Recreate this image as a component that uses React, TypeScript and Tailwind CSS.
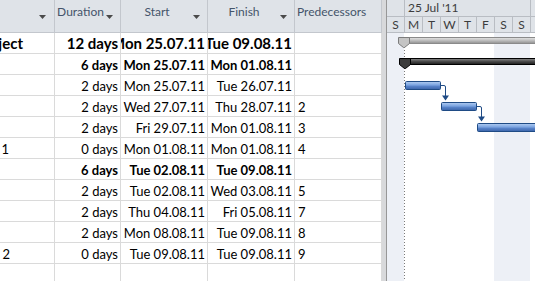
import React from 'react';

type Row = {
  name?: string;
  namePad?: string;
  dur: string;
  start: string;
  finish: string;
  pred?: string;
  kind?: 'project' | 'summary';
};

const rows: Row[] = [
  { name: 'Project', namePad: 'pr-[31px]', dur: '12 days', start: 'Mon 25.07.11', finish: 'Tue 09.08.11', kind: 'project' },
  { dur: '6 days', start: 'Mon 25.07.11', finish: 'Mon 01.08.11', kind: 'summary' },
  { dur: '2 days', start: 'Mon 25.07.11', finish: 'Tue 26.07.11' },
  { dur: '2 days', start: 'Wed 27.07.11', finish: 'Thu 28.07.11', pred: '2' },
  { dur: '2 days', start: 'Fri 29.07.11', finish: 'Mon 01.08.11', pred: '3' },
  { name: 'Milestone 1', namePad: 'pr-[45px]', dur: '0 days', start: 'Mon 01.08.11', finish: 'Mon 01.08.11', pred: '4' },
  { dur: '6 days', start: 'Tue 02.08.11', finish: 'Tue 09.08.11', kind: 'summary' },
  { dur: '2 days', start: 'Tue 02.08.11', finish: 'Wed 03.08.11', pred: '5' },
  { dur: '2 days', start: 'Thu 04.08.11', finish: 'Fri 05.08.11', pred: '7' },
  { dur: '2 days', start: 'Mon 08.08.11', finish: 'Tue 09.08.11', pred: '8' },
  { name: 'Milestone 2', namePad: 'pr-[44px]', dur: '0 days', start: 'Tue 09.08.11', finish: 'Tue 09.08.11', pred: '9' },
  { dur: '', start: '', finish: '' },
];

const days = ['S', 'M', 'T', 'W', 'T', 'F', 'S', 'S'];

function DropArrow() {
  return (
    <svg width="7" height="4" viewBox="0 0 7 4" className="shrink-0">
      <path d="M0 0h7L3.5 4z" fill="#4a4a4a" />
    </svg>
  );
}

function weightClass(kind?: Row['kind']) {
  if (kind === 'project') return 'font-bold text-[15px] leading-[20px]';
  if (kind === 'summary') return 'font-bold text-[13px] leading-[22px]';
  return 'text-[13px] leading-[22px]';
}

function Gantt() {
  return (
    <svg width="148" height="248" viewBox="387 33 148 248" className="block">
      <defs>
        <linearGradient id="task" x1="0" y1="0" x2="0" y2="1">
          <stop offset="0" stopColor="#b2cdf2" />
          <stop offset="0.45" stopColor="#7aa3e0" />
          <stop offset="0.6" stopColor="#5883c9" />
          <stop offset="1" stopColor="#3a64a8" />
        </linearGradient>
        <linearGradient id="proj" x1="0" y1="0" x2="0" y2="1">
          <stop offset="0" stopColor="#e6e6e6" />
          <stop offset="0.5" stopColor="#bdbdbd" />
          <stop offset="1" stopColor="#8f8f8f" />
        </linearGradient>
        <linearGradient id="summ" x1="0" y1="0" x2="0" y2="1">
          <stop offset="0" stopColor="#8a8a8a" />
          <stop offset="0.5" stopColor="#4a4a4a" />
          <stop offset="1" stopColor="#1a1a1a" />
        </linearGradient>
      </defs>
      <rect x="387" y="33" width="17" height="248" fill="#edf0f6" />
      <rect x="494" y="33" width="36" height="248" fill="#edf0f6" />
      <line x1="404.5" y1="47" x2="404.5" y2="281" stroke="#7a7a7a" strokeDasharray="1 2" />

      {/* project summary */}
      <rect x="400.5" y="37.5" width="140" height="6" fill="url(#proj)" stroke="#8a8a8a" />
      <path d="M398.5 37.5h11v6l-5 4h-1l-5-4z" fill="#c4c4c4" stroke="#7c7c7c" />

      {/* phase summary */}
      <rect x="400.5" y="58.5" width="140" height="6" fill="url(#summ)" stroke="#000" />
      <path d="M399.5 58.5h11v6l-5 4h-1l-5-4z" fill="#3c3c3c" stroke="#000" />

      {/* tasks */}
      <rect x="405.5" y="81.5" width="35" height="8" rx="1" fill="url(#task)" stroke="#1f4b85" />
      <rect x="441.5" y="102.5" width="35" height="8" rx="1" fill="url(#task)" stroke="#1f4b85" />
      <rect x="477.5" y="123.5" width="80" height="8" rx="1" fill="url(#task)" stroke="#1f4b85" />

      {/* links */}
      <path d="M441 85.5h3q1.5 0 1.5 1.5V96" fill="none" stroke="#1f4b85" />
      <path d="M442 95.5h7l-3.5 5z" fill="#1f4b85" />
      <path d="M477 106.5h3q1.5 0 1.5 1.5V117" fill="none" stroke="#1f4b85" />
      <path d="M478 116.5h7l-3.5 5z" fill="#1f4b85" />
    </svg>
  );
}

export default function App() {
  return (
    <div className="w-[535px] h-[281px] overflow-hidden flex bg-white font-['Lato',sans-serif] text-black">
      {/* table */}
      <div className="w-[382px] shrink-0 flex flex-col">
        <div className="h-[33px] shrink-0 grid grid-cols-[55px_66px_87px_87px_87px] bg-[#dfe3e8] border-b border-[#c3c7cd] text-[12px] leading-[16px] text-[#44546a]">
          <div className="flex justify-end border-r border-[#c3c7cd] pr-[8px] pt-[15px]">
            <DropArrow />
          </div>
          <div className="flex border-r border-[#c3c7cd] pr-[7px]">
            <span className="flex-1 text-center pt-[4px]">Duration</span>
            <div className="pt-[15px]"><DropArrow /></div>
          </div>
          <div className="flex border-r border-[#c3c7cd] pr-[7px]">
            <span className="flex-1 text-center pt-[4px]">Start</span>
            <div className="pt-[15px]"><DropArrow /></div>
          </div>
          <div className="flex border-r border-[#c3c7cd] pr-[7px]">
            <span className="flex-1 text-center pt-[4px]">Finish</span>
            <div className="pt-[15px]"><DropArrow /></div>
          </div>
          <div className="border-r border-[#c3c7cd] pl-[2px] pt-[4px] whitespace-nowrap overflow-hidden">Predecessors</div>
        </div>

        {rows.map((r, i) => (
          <div
            key={i}
            className={`h-[21px] shrink-0 grid grid-cols-[55px_66px_87px_87px_87px] border-b border-[#dadada] ${weightClass(r.kind)}`}
          >
            <div className={`flex justify-end overflow-hidden whitespace-nowrap border-r border-[#dadada] ${r.namePad ?? ''}`}>
              {r.name}
            </div>
            <div className="flex justify-end overflow-hidden whitespace-nowrap border-r border-[#dadada] pr-[2px]">{r.dur}</div>
            <div className="flex justify-end overflow-hidden whitespace-nowrap border-r border-[#dadada] pr-[2px]">{r.start}</div>
            <div className="flex justify-end overflow-hidden whitespace-nowrap border-r border-[#dadada] pr-[2px]">{r.finish}</div>
            <div className="overflow-hidden whitespace-nowrap border-r border-[#dadada] pl-[3px]">{r.pred}</div>
          </div>
        ))}
        <div className="flex-1 grid grid-cols-[55px_66px_87px_87px_87px]">
          <div className="border-r border-[#dadada]" />
          <div className="border-r border-[#dadada]" />
          <div className="border-r border-[#dadada]" />
          <div className="border-r border-[#dadada]" />
          <div className="border-r border-[#b4b4b4]" />
        </div>
      </div>

      {/* splitter */}
      <div className="w-[5px] shrink-0 bg-[#d8d9db] border-r border-[#979797]" />

      {/* gantt */}
      <div className="flex-1 flex flex-col min-w-0">
        <div className="h-[33px] shrink-0 bg-[#dfe3e8] border-b border-[#b9bdc3] text-[12px] text-[#3c3c3c] flex flex-col">
          <div className="h-[17px] flex border-b border-[#b9bdc3]">
            <div className="w-[18px] shrink-0 border-r border-[#b9bdc3]" />
            <div className="w-[126px] shrink-0 border-r border-[#b9bdc3] pl-[3px] leading-[16px] whitespace-nowrap">25 Jul '11</div>
          </div>
          <div className="h-[15px] flex leading-[15px]">
            {days.map((d, i) => (
              <div key={i} className="w-[18px] shrink-0 border-r border-[#b9bdc3] text-center">{d}</div>
            ))}
          </div>
        </div>
        <Gantt />
      </div>
    </div>
  );
}
